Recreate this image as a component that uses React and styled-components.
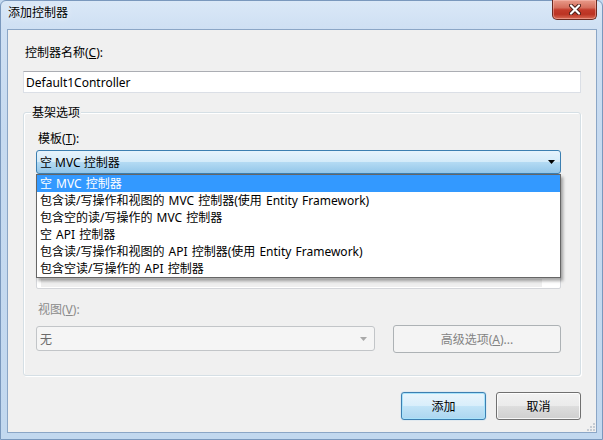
import React from "react";
import styled, { createGlobalStyle, css } from "styled-components";

const templates = [
  "空 MVC 控制器",
  "包含读/写操作和视图的 MVC 控制器(使用 Entity Framework)",
  "包含空的读/写操作的 MVC 控制器",
  "空 API 控制器",
  "包含读/写操作和视图的 API 控制器(使用 Entity Framework)",
  "包含空读/写操作的 API 控制器",
];

const Arrow = ({ color = "#000" }) => (
  <svg width="7" height="4" viewBox="0 0 7 4">
    <path d="M0 0 H7 L3.5 4 Z" fill={color} />
  </svg>
);

const App = () => {
  return (
    <>
      <GlobalStyle />
      <Window>
        <TitleBar>
          <Title>添加控制器</Title>
          <CloseButton>
            <svg width="12" height="11" viewBox="0 0 12 11">
              <path d="M2 1.5 L10 9.5 M10 1.5 L2 9.5" stroke="#4a1d16" strokeWidth="4" strokeLinecap="round" />
              <path d="M2 1.5 L10 9.5 M10 1.5 L2 9.5" stroke="#fff" strokeWidth="2.2" strokeLinecap="round" />
            </svg>
          </CloseButton>
        </TitleBar>
        <Client>
          <Label>
            控制器名称(<u>C</u>):
          </Label>
          <TextInput readOnly defaultValue="Default1Controller" />
          <GroupBox>
            <Legend>基架选项</Legend>
            <Label>
              模板(<u>T</u>):
            </Label>
            <ComboWrap>
              <Combo open>
                <span>空 MVC 控制器</span>
                <Arrow />
              </Combo>
              <DropList>
                {templates.map((t, i) => (
                  <DropItem key={t} selected={i === 0}>
                    {t}
                  </DropItem>
                ))}
              </DropList>
            </ComboWrap>
            <CoveredBox>
              <CoveredStrip />
            </CoveredBox>
            <Label disabled top={13}>
              视图(<u>V</u>):
            </Label>
            <Row>
              <Combo disabled>
                <span>无</span>
                <Arrow color="#a9a9a9" />
              </Combo>
              <Button variant="disabled">
                高级选项(<u>A</u>)...
              </Button>
            </Row>
          </GroupBox>
          <Footer>
            <Button variant="default">添加</Button>
            <Button>取消</Button>
          </Footer>
          <Grip>
            <svg width="8" height="8" viewBox="0 0 8 8">
              {[
                [6, 0],
                [6, 3],
                [3, 3],
                [6, 6],
                [3, 6],
                [0, 6],
              ].map(([x, y]) => (
                <rect key={`${x}-${y}`} x={x} y={y} width="2" height="2" fill="#c6ccd3" />
              ))}
            </svg>
          </Grip>
        </Client>
      </Window>
    </>
  );
};

export default App;

const GlobalStyle = createGlobalStyle`
  html, body {
    margin: 0;
    padding: 0;
    background: #c4d9f0;
  }
  body {
    font-family: "Noto Sans", "Noto Sans CJK SC", sans-serif;
    font-size: 12px;
    color: #000;
  }
  u {
    text-decoration: underline;
    text-underline-offset: 1px;
  }
`;

const Window = styled.div`
  width: 603px;
  height: 440px;
  box-sizing: border-box;
  display: flex;
  flex-direction: column;
  padding: 0 5px 6px 6px;
  border: 1px solid #7a98bd;
  border-radius: 6px 6px 0 0;
  background: linear-gradient(
    180deg,
    #dae8f7 0%,
    #cfe0f3 6%,
    #c6daf0 30%,
    #c2d8ef 100%
  );
`;

const TitleBar = styled.div`
  height: 28px;
  display: flex;
  align-items: flex-start;
  justify-content: space-between;
`;

const Title = styled.div`
  margin: 4px 0 0 1px;
  line-height: 16px;
  color: #000;
  text-shadow: 0 0 6px rgba(255, 255, 255, 0.9);
`;

const CloseButton = styled.div`
  width: 45px;
  height: 20px;
  box-sizing: border-box;
  margin-top: -1px;
  display: flex;
  align-items: center;
  justify-content: center;
  border: 1px solid #6a2a21;
  border-top: none;
  border-radius: 0 0 5px 5px;
  background: linear-gradient(
    180deg,
    #e99b8a 0%,
    #d66f5d 40%,
    #c33b2b 52%,
    #bb3323 75%,
    #d86a55 100%
  );
  box-shadow: inset 0 0 0 1px rgba(255, 200, 190, 0.45);
`;

const Client = styled.div`
  position: relative;
  flex: 1;
  display: flex;
  flex-direction: column;
  padding: 15px 15px 0 15px;
  background: #f0f0f0;
  border: 1px solid #8ba6c6;
`;

const Label = styled.div`
  line-height: 16px;
  margin-left: 2px;
  margin-top: ${(p) => p.top || 0}px;
  color: ${(p) => (p.disabled ? "#8b8b8b" : "#000")};
`;

const TextInput = styled.input`
  display: block;
  box-sizing: border-box;
  height: 22px;
  margin: 10px 0 0 0;
  padding: 0 2px;
  font: inherit;
  color: #000;
  background: #fff;
  border: 1px solid #dbdfe6;
  border-top-color: #abadb3;
  outline: none;
`;

const GroupBox = styled.div`
  position: relative;
  margin-top: 19px;
  padding: 18px 19px 22px 12px;
  border: 1px solid #d5dfe5;
  border-radius: 3px;
  box-shadow: inset 1px 1px 0 #fff, 1px 1px 0 #fff;
`;

const Legend = styled.div`
  position: absolute;
  top: -8px;
  left: 7px;
  padding: 0 1px;
  line-height: 16px;
  background: #f0f0f0;
`;

const ComboWrap = styled.div`
  position: relative;
  margin-top: 3px;
`;

const Combo = styled.div`
  box-sizing: border-box;
  height: 24px;
  display: flex;
  align-items: center;
  justify-content: space-between;
  padding: 0 5px 0 3px;
  border-radius: 3px;
  border: 1px solid #3c7fb1;
  background: linear-gradient(180deg, #e6f3fc 0%, #d4ebf9 48%, #b3daf3 52%, #93c6e9 100%);

  ${(p) =>
    p.disabled &&
    css`
      width: 339px;
      height: 25px;
      margin-top: 1px;
      border-color: #c2c5c8;
      background: #f5f5f5;
      color: #6b6b6b;
      padding-right: 7px;
    `}
`;

const DropList = styled.div`
  position: absolute;
  top: 100%;
  left: 0;
  right: 0;
  z-index: 2;
  background: #fff;
  border: 1px solid #666;
  box-shadow: 2px 3px 3px rgba(0, 0, 0, 0.35);
`;

const DropItem = styled.div`
  height: 17px;
  line-height: 17px;
  padding-left: 3px;
  white-space: nowrap;
  word-spacing: 1px;
  background: ${(p) => (p.selected ? "#3399ff" : "transparent")};
  color: ${(p) => (p.selected ? "#fff" : "#000")};
`;

const CoveredBox = styled.div`
  box-sizing: border-box;
  height: 108px;
  margin-top: 7px;
  display: flex;
  flex-direction: column;
  justify-content: flex-end;
  background: #fff;
  border: 1px solid #d4d6da;
  border-radius: 2px;
`;

const CoveredStrip = styled.div`
  height: 8px;
  margin: 0 18px 1px 4px;
  background: #efefef;
`;

const Row = styled.div`
  display: flex;
  align-items: flex-start;
  gap: 18px;
  margin-top: 7px;
`;

const Button = styled.div`
  box-sizing: border-box;
  height: 28px;
  width: 85px;
  display: flex;
  align-items: center;
  justify-content: center;
  border-radius: 3px;
  border: 1px solid #707070;
  background: linear-gradient(180deg, #f2f2f2 0%, #ebebeb 48%, #dddddd 52%, #cfcfcf 100%);
  box-shadow: inset 0 0 0 1px rgba(255, 255, 255, 0.8);

  ${(p) =>
    p.variant === "default" &&
    css`
      border-color: #3c7fb1;
      background: linear-gradient(180deg, #e9f5fc 0%, #d9eefb 48%, #c1e3f7 52%, #acd6f0 100%);
      box-shadow: inset 0 0 0 1px #a8e3fb, 0 0 1px #5fb0e6;
    `}

  ${(p) =>
    p.variant === "disabled" &&
    css`
      flex: 1;
      width: auto;
      color: #838383;
      border-color: #adb2b5;
      background: #f4f4f4;
      box-shadow: none;
    `}
`;

const Footer = styled.div`
  display: flex;
  justify-content: flex-end;
  gap: 10px;
  margin-top: 16px;
`;

const Grip = styled.div`
  position: absolute;
  right: 1px;
  bottom: 1px;
  line-height: 0;
`;
